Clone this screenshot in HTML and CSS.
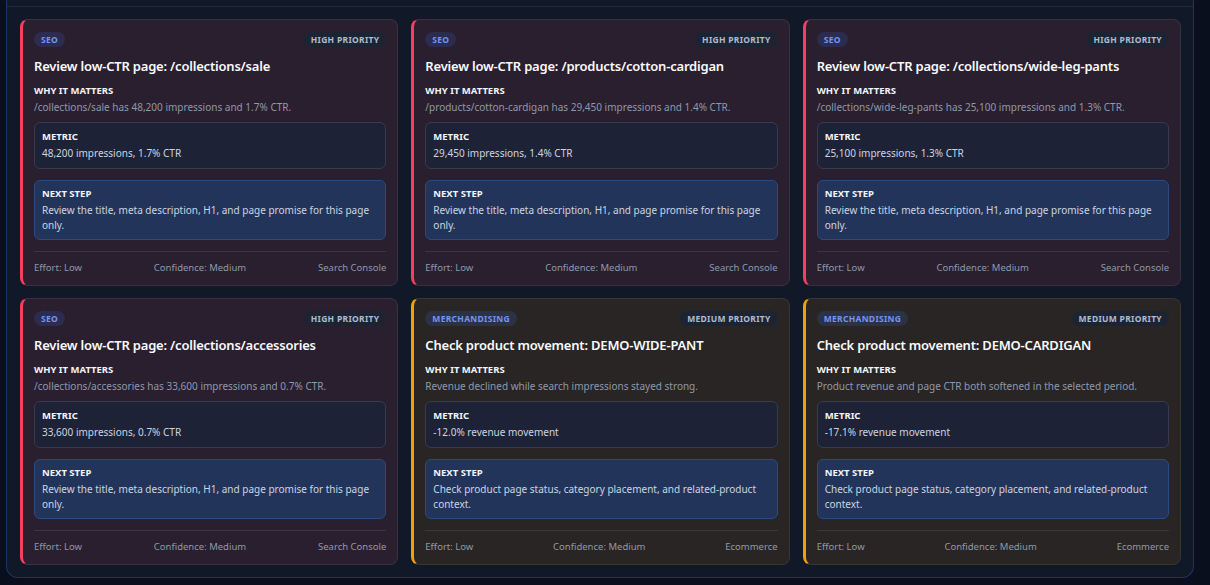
FILE: index.html
```html
<!DOCTYPE html>
<html lang="en">

<head>
    <meta charset="UTF-8">
    <meta name="viewport" content="width=device-width, initial-scale=1.0">
    <title>Recommendations</title>
    <link rel="stylesheet" href="styles.css">
</head>

<body>
    <section class="panel">
        <div class="panel-head"></div>
        <div class="grid">

            <div class="card seo">
                <div class="card-top">
                    <span class="tag">SEO</span>
                    <span class="priority">High priority</span>
                </div>
                <h3>Review low-CTR page: /collections/sale</h3>
                <h4>Why it matters</h4>
                <p class="why">/collections/sale has 48,200 impressions and 1.7% CTR.</p>
                <div class="box metric">
                    <h4>Metric</h4>
                    <p>48,200 impressions, 1.7% CTR</p>
                </div>
                <div class="box next">
                    <h4>Next step</h4>
                    <p>Review the title, meta description, H1, and page promise for this page only.</p>
                </div>
                <div class="card-foot">
                    <span>Effort: Low</span>
                    <span>Confidence: Medium</span>
                    <span>Search Console</span>
                </div>
            </div>

            <div class="card seo">
                <div class="card-top">
                    <span class="tag">SEO</span>
                    <span class="priority">High priority</span>
                </div>
                <h3>Review low-CTR page: /products/cotton-cardigan</h3>
                <h4>Why it matters</h4>
                <p class="why">/products/cotton-cardigan has 29,450 impressions and 1.4% CTR.</p>
                <div class="box metric">
                    <h4>Metric</h4>
                    <p>29,450 impressions, 1.4% CTR</p>
                </div>
                <div class="box next">
                    <h4>Next step</h4>
                    <p>Review the title, meta description, H1, and page promise for this page only.</p>
                </div>
                <div class="card-foot">
                    <span>Effort: Low</span>
                    <span>Confidence: Medium</span>
                    <span>Search Console</span>
                </div>
            </div>

            <div class="card seo">
                <div class="card-top">
                    <span class="tag">SEO</span>
                    <span class="priority">High priority</span>
                </div>
                <h3>Review low-CTR page: /collections/wide-leg-pants</h3>
                <h4>Why it matters</h4>
                <p class="why">/collections/wide-leg-pants has 25,100 impressions and 1.3% CTR.</p>
                <div class="box metric">
                    <h4>Metric</h4>
                    <p>25,100 impressions, 1.3% CTR</p>
                </div>
                <div class="box next">
                    <h4>Next step</h4>
                    <p>Review the title, meta description, H1, and page promise for this page only.</p>
                </div>
                <div class="card-foot">
                    <span>Effort: Low</span>
                    <span>Confidence: Medium</span>
                    <span>Search Console</span>
                </div>
            </div>

            <div class="card seo">
                <div class="card-top">
                    <span class="tag">SEO</span>
                    <span class="priority">High priority</span>
                </div>
                <h3>Review low-CTR page: /collections/accessories</h3>
                <h4>Why it matters</h4>
                <p class="why">/collections/accessories has 33,600 impressions and 0.7% CTR.</p>
                <div class="box metric">
                    <h4>Metric</h4>
                    <p>33,600 impressions, 0.7% CTR</p>
                </div>
                <div class="box next">
                    <h4>Next step</h4>
                    <p>Review the title, meta description, H1, and page promise for this page only.</p>
                </div>
                <div class="card-foot">
                    <span>Effort: Low</span>
                    <span>Confidence: Medium</span>
                    <span>Search Console</span>
                </div>
            </div>

            <div class="card merch">
                <div class="card-top">
                    <span class="tag">Merchandising</span>
                    <span class="priority">Medium priority</span>
                </div>
                <h3>Check product movement: DEMO-WIDE-PANT</h3>
                <h4>Why it matters</h4>
                <p class="why">Revenue declined while search impressions stayed strong.</p>
                <div class="box metric">
                    <h4>Metric</h4>
                    <p>-12.0% revenue movement</p>
                </div>
                <div class="box next">
                    <h4>Next step</h4>
                    <p>Check product page status, category placement, and related-product context.</p>
                </div>
                <div class="card-foot">
                    <span>Effort: Low</span>
                    <span>Confidence: Medium</span>
                    <span>Ecommerce</span>
                </div>
            </div>

            <div class="card merch">
                <div class="card-top">
                    <span class="tag">Merchandising</span>
                    <span class="priority">Medium priority</span>
                </div>
                <h3>Check product movement: DEMO-CARDIGAN</h3>
                <h4>Why it matters</h4>
                <p class="why">Product revenue and page CTR both softened in the selected period.</p>
                <div class="box metric">
                    <h4>Metric</h4>
                    <p>-17.1% revenue movement</p>
                </div>
                <div class="box next">
                    <h4>Next step</h4>
                    <p>Check product page status, category placement, and related-product context.</p>
                </div>
                <div class="card-foot">
                    <span>Effort: Low</span>
                    <span>Confidence: Medium</span>
                    <span>Ecommerce</span>
                </div>
            </div>

        </div>
    </section>
</body>

</html>
```

FILE: styles.css
```css
* {
    box-sizing: border-box;
}

body {
    margin: 0;
    background-color: #0a0f1d;
    font-family: "Noto Sans", "Open Sans", sans-serif;
    color: #e5e7eb;
}

.panel {
    margin: 0 16px 9px 6px;
    background-color: #111827;
    border: 1px solid #1f3663;
    border-top: none;
    border-radius: 0 0 12px 12px;
}

.panel-head {
    height: 7px;
    border-bottom: 1px solid #1f2a3d;
}

.grid {
    display: grid;
    grid-template-columns: repeat(3, 1fr);
    gap: 12px 13px;
    padding: 12px 12px 12px 13px;
}

.card {
    display: flex;
    flex-direction: column;
    border: 1px solid #393141;
    border-left: 3px solid #f43f5e;
    border-radius: 8px;
    padding: 12px 11px 10px 11px;
}

.card.seo {
    background-color: #2a1f2e;
}

.card.merch {
    background-color: #292524;
    border-color: #3a3533;
    border-left-color: #f59e0b;
}

.card-top {
    display: flex;
    justify-content: space-between;
    align-items: center;
    height: 15px;
}

.tag,
.priority {
    font-size: 8.5px;
    font-weight: 700;
    text-transform: uppercase;
    letter-spacing: 0.3px;
    padding: 2px 7px;
    border-radius: 8px;
    line-height: 11px;
}

.tag {
    background-color: #2b2c50;
    color: #7494f0;
}

.merch .tag {
    background-color: #2b3245;
}

.priority {
    background-color: #1c2434;
    color: #b0bbcc;
}

h3 {
    margin: 10px 0 0;
    font-size: 13px;
    font-weight: 600;
    letter-spacing: -0.2px;
    line-height: 18px;
    color: #f8fafc;
}

h4 {
    margin: 0;
    font-size: 9.5px;
    font-weight: 700;
    text-transform: uppercase;
    color: #f1f5f9;
    line-height: 14px;
}

.card > h4 {
    margin-top: 9px;
}

.why {
    margin: 2px 0 0;
    font-size: 10px;
    line-height: 14px;
    color: #8e99ab;
}

.box {
    border-radius: 6px;
    padding: 7px 7px 7px 7px;
}

.box p {
    margin: 2px 0 0;
    font-size: 10px;
    line-height: 15px;
    color: #cbd5e1;
}

.metric {
    margin-top: 8px;
    background-color: #1e2236;
    border: 1px solid #373b50;
}

.next {
    margin-top: 11px;
    padding-top: 6px;
    padding-bottom: 6px;
    background-color: #23345a;
    border: 1px solid #2c4a80;
}

.card-foot {
    margin-top: 11px;
    border-top: 1px solid #3d3546;
    padding-top: 9px;
    display: flex;
    justify-content: space-between;
    font-size: 9.5px;
    line-height: 14px;
    color: #8e99ab;
}

.merch .card-foot {
    border-top-color: #3d3836;
}
```
